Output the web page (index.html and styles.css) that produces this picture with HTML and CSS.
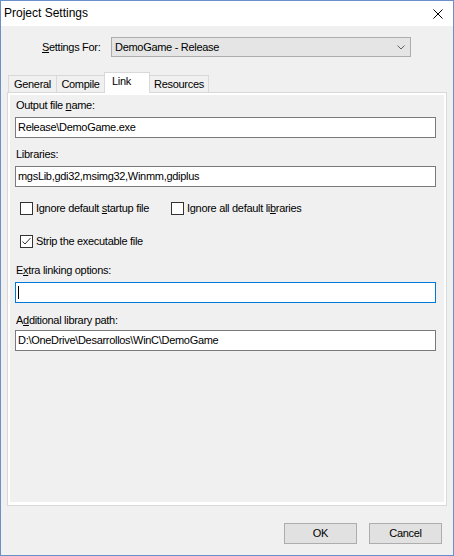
FILE: index.html
```html
<!DOCTYPE html>
<html>
<head>
<meta charset="utf-8">
<link rel="stylesheet" href="styles.css">
</head>
<body>
<div class="window">
  <div class="titlebar">
    <span class="title">Project Settings</span>
    <span class="close">
      <svg width="10" height="10" viewBox="0 0 10 10"><path d="M0.5 0.5 L9.5 9.5 M9.5 0.5 L0.5 9.5" stroke="#000" stroke-width="1" fill="none"/></svg>
    </span>
  </div>
  <div class="client">
    <div class="settings-row">
      <span class="settings-label"><u>S</u>ettings For:</span>
      <div class="combo">
        <span class="combo-text">DemoGame - Release</span>
        <svg class="chevron" width="8" height="5" viewBox="0 0 8 5"><path d="M0.5 0.5 L4 4 L7.5 0.5" stroke="#606060" stroke-width="1" fill="none"/></svg>
      </div>
    </div>
    <div class="tabs">
      <div class="tab tab-general">General</div>
      <div class="tab tab-compile">Compile</div>
      <div class="tab tab-link active">Link</div>
      <div class="tab tab-res">Resources</div>
    </div>
    <div class="panel">
      <div class="page">
        <div class="label l1">Output file <u>n</u>ame:</div>
        <div class="field f1">Release\DemoGame.exe</div>
        <div class="label l2">Libraries:</div>
        <div class="field f2">mgsLib,gdi32,msimg32,Winmm,gdiplus</div>
        <div class="check-row r1">
          <div class="check-item c1"><span class="box"></span><span>Ignore default <u>s</u>tartup file</span></div>
          <div class="check-item c2"><span class="box"></span><span>Ignore all default li<u>b</u>raries</span></div>
        </div>
        <div class="check-row r2">
          <div class="check-item"><span class="box"><svg width="11" height="11" viewBox="0 0 11 11"><path d="M1.5 5.5 L4 8 L9.5 2" stroke="#333" stroke-width="1" fill="none"/></svg></span><span>Strip the executable file</span></div>
        </div>
        <div class="label l3">E<u>x</u>tra linking options:</div>
        <div class="field f3 focus"><span class="caret"></span></div>
        <div class="label l4">A<u>d</u>ditional library path:</div>
        <div class="field f4">D:\OneDrive\Desarrollos\WinC\DemoGame</div>
      </div>
    </div>
    <div class="footer">
      <div class="btn">OK</div>
      <div class="btn">Cancel</div>
    </div>
  </div>
</div>
</body>
</html>
```
FILE: styles.css
```css
html, body {
  margin: 0;
  padding: 0;
  background: #f0f0f0;
}
.window {
  width: 454px;
  height: 556px;
  box-sizing: border-box;
  border: 1px solid #6b8fc9;
  display: flex;
  flex-direction: column;
  font-family: "Liberation Sans", Arial, sans-serif;
  font-size: 11px;
  letter-spacing: -0.3px;
  color: #000;
}
.titlebar {
  height: 25px;
  background: #fff;
  display: flex;
  align-items: flex-start;
  justify-content: space-between;
}
.title {
  font-size: 12px;
  letter-spacing: 0;
  line-height: 24px;
  padding-left: 3px;
}
.close {
  display: flex;
  padding-top: 8px;
  margin-right: 10px;
}
.client {
  flex: 1;
  background: #f0f0f0;
  display: flex;
  flex-direction: column;
  padding-top: 11px;
}
.settings-row {
  display: flex;
  align-items: center;
  height: 20px;
  padding-left: 41px;
}
.settings-label {
  width: 69px;
  line-height: 13px;
}
.combo {
  width: 300px;
  height: 20px;
  box-sizing: border-box;
  border: 1px solid #adadad;
  background: #e5e5e5;
  display: flex;
  align-items: center;
  justify-content: space-between;
  padding: 0 5px 0 3px;
  line-height: 13px;
}
.chevron {
  margin-top: 1px;
}
.tabs {
  display: flex;
  align-items: flex-end;
  height: 20px;
  margin-top: 15px;
  padding-left: 7px;
  position: relative;
  z-index: 1;
}
.tab {
  box-sizing: border-box;
  height: 17px;
  border: 1px solid #d9d9d9;
  border-bottom: none;
  background: #f0f0f0;
  padding-top: 2px;
  line-height: 13px;
  text-align: center;
  margin-left: -1px;
}
.tab-general { width: 49px; margin-left: 0; }
.tab-compile { width: 49px; }
.tab-link { width: 46px; }
.tab-res { width: 60px; }
.tab.active {
  height: 21px;
  background: #fff;
  margin-bottom: -1px;
  text-align: left;
  padding-left: 7px;
  position: relative;
  z-index: 2;
}
.panel {
  margin-left: 6px;
  width: 440px;
  height: 414px;
  box-sizing: border-box;
  border: 1px solid #d9d9d9;
  background: #fff;
  padding: 2px 2px 3px 2px;
  display: flex;
}
.page {
  flex: 1;
  background: #f0f0f0;
  padding-left: 5px;
  display: flex;
  flex-direction: column;
  align-items: flex-start;
}
.label {
  line-height: 13px;
  padding-left: 1px;
}
.l1 { margin-top: 4px; }
.l2 { margin-top: 10px; }
.l3 { margin-top: 16px; }
.l4 { margin-top: 11px; }
.field {
  width: 421px;
  height: 21px;
  box-sizing: border-box;
  border: 1px solid #7a7a7a;
  background: #fff;
  padding-left: 2px;
  line-height: 19px;
  display: flex;
  align-items: center;
}
.f1 { margin-top: 5px; }
.f2 { margin-top: 5px; }
.f3 { margin-top: 5px; }
.f4 { margin-top: 3px; }
.field.focus {
  border-color: #0078d7;
}
.caret {
  width: 1px;
  height: 13px;
  background: #000;
}
.check-row {
  display: flex;
  padding-left: 5px;
  height: 13px;
}
.r1 { margin-top: 15px; }
.r2 { margin-top: 20px; }
.check-item {
  display: flex;
  align-items: center;
  line-height: 13px;
}
.c1 { width: 151px; }
.box {
  width: 13px;
  height: 13px;
  box-sizing: border-box;
  border: 1px solid #333;
  background: #fff;
  margin-right: 3px;
  display: flex;
  align-items: center;
  justify-content: center;
}
.footer {
  display: flex;
  justify-content: flex-end;
  gap: 12px;
  margin-top: 17px;
  padding-right: 11px;
}
.btn {
  width: 73px;
  height: 21px;
  box-sizing: border-box;
  border: 1px solid #adadad;
  background: #e1e1e1;
  text-align: center;
  line-height: 19px;
}
```
